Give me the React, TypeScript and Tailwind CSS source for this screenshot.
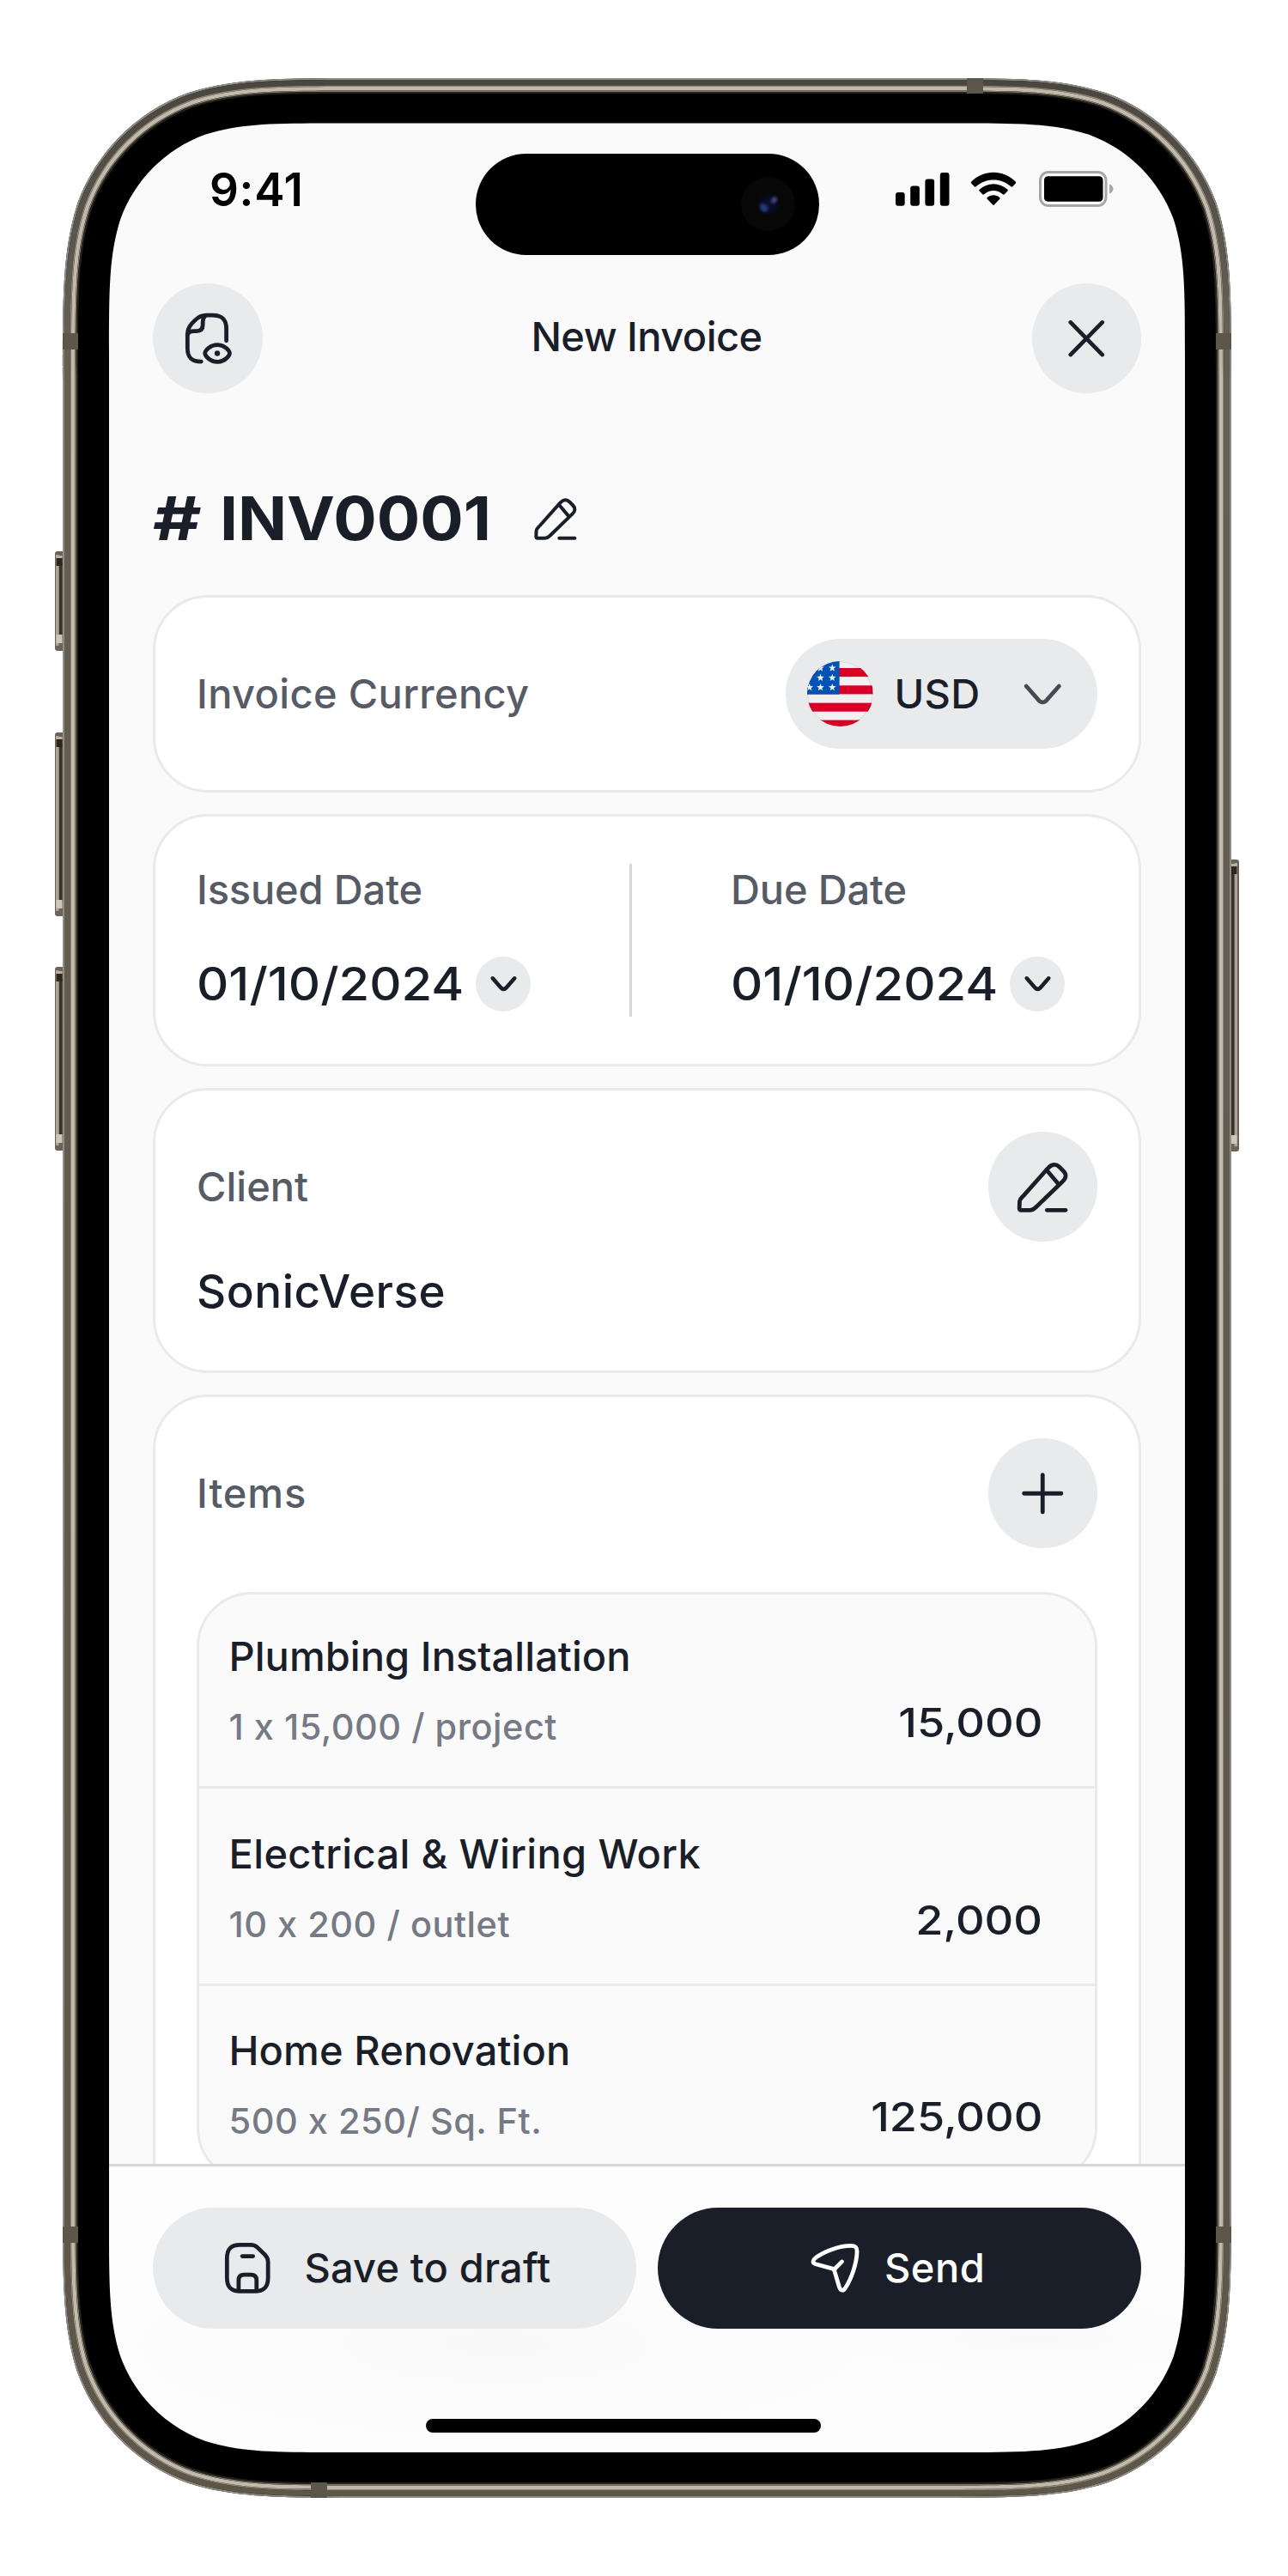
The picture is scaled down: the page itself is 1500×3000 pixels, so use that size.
import type { ReactNode } from "react";

/** Rounded rectangle with continuous (smoothed) corners. */
function squircle(x0: number, y0: number, x1: number, y1: number, r: number) {
  const k = [1.52866, 1.08849, 0.86841, 0.63149, 0.37282, 0.16906, 0.07491].map((v) => v * r);
  const [a, b, c, d, e, f, g] = k;
  return [
    `M${x0 + a} ${y0}H${x1 - a}`,
    `C${x1 - b} ${y0} ${x1 - c} ${y0} ${x1 - d} ${y0 + g}`,
    `C${x1 - e} ${y0 + f} ${x1 - f} ${y0 + e} ${x1 - g} ${y0 + d}`,
    `C${x1} ${y0 + c} ${x1} ${y0 + b} ${x1} ${y0 + a}`,
    `V${y1 - a}`,
    `C${x1} ${y1 - b} ${x1} ${y1 - c} ${x1 - g} ${y1 - d}`,
    `C${x1 - f} ${y1 - e} ${x1 - e} ${y1 - f} ${x1 - d} ${y1 - g}`,
    `C${x1 - c} ${y1} ${x1 - b} ${y1} ${x1 - a} ${y1}`,
    `H${x0 + a}`,
    `C${x0 + b} ${y1} ${x0 + c} ${y1} ${x0 + d} ${y1 - g}`,
    `C${x0 + e} ${y1 - f} ${x0 + f} ${y1 - e} ${x0 + g} ${y1 - d}`,
    `C${x0} ${y1 - c} ${x0} ${y1 - b} ${x0} ${y1 - a}`,
    `V${y0 + a}`,
    `C${x0} ${y0 + b} ${x0} ${y0 + c} ${x0 + g} ${y0 + d}`,
    `C${x0 + f} ${y0 + e} ${x0 + e} ${y0 + f} ${x0 + d} ${y0 + g}`,
    `C${x0 + c} ${y0} ${x0 + b} ${y0} ${x0 + a} ${y0}Z`,
  ].join("");
}

const W = 1361;
const H = 2818;
const inset = (i: number) => squircle(i, i, W - i, H - i, 231 - i);
const screenHole = squircle(54, 52.5, 1307, 2765, 177);

const metal: [number, number, string][] = [
  [0, 2, "#8f8c86"],
  [2, 8.5, "url(#edge)"],
  [8.5, 10, "#8d8679"],
  [10, 14.5, "#c1baac"],
  [14.5, 16, "#7b7467"],
  [16, 18, "#26221c"],
];

function SideButton({ x, y, h, right }: { x: number; y: number; h: number; right?: boolean }) {
  return (
    <g>
      <rect x={x} y={y} width={11} height={h} rx={3} fill="#6b6458" />
      <rect x={right ? x + 5.5 : x + 1} y={y + 4} width={3.5} height={h - 10} fill="#aaa396" />
      <rect x={right ? x + 2 : x + 5} y={y + 14} width={3.5} height={h - 30} fill="#37322a" />
      <rect x={x + 1.5} y={y + 8} width={7} height={9} fill="#2b271f" />
      <rect x={x + 1.5} y={y + 5} width={7} height={3} fill="#b9b2a4" />
      <rect x={x + 1.5} y={y + h - 19} width={7} height={10} fill="#cdc6b9" />
    </g>
  );
}

function PhoneFrame() {
  return (
    <svg className="pointer-events-none absolute inset-0 overflow-visible" width={W} height={H} viewBox={`0 0 ${W} ${H}`}>
      <defs>
        <linearGradient id="edge" x1="0" y1="0" x2="0" y2="1">
          <stop offset="0" stopColor="#4a463e" />
          <stop offset="0.1" stopColor="#655f54" />
          <stop offset="1" stopColor="#5e5649" />
        </linearGradient>
      </defs>
      <SideButton x={-9} y={551} h={116} />
      <SideButton x={-9} y={762} h={214} />
      <SideButton x={-9} y={1035} h={214} />
      <SideButton x={1359} y={910} h={340} right />
      <path d={inset(0) + screenHole} fillRule="evenodd" fill="#000" />
      {metal.map(([a, b, fill]) => (
        <path key={a} d={inset(a) + inset(b)} fillRule="evenodd" fill={fill} />
      ))}
      <g fill="#5d574b">
        <rect x={0} y={297} width={18} height={19} />
        <rect x={1343} y={297} width={18} height={19} />
        <rect x={0} y={2502} width={18} height={19} />
        <rect x={1343} y={2502} width={18} height={19} />
        <rect x={1053} y={0} width={19} height={18} />
        <rect x={289} y={2800} width={19} height={18} />
      </g>
    </svg>
  );
}

function Icon({ className, sw = 1.5, children }: { className: string; sw?: number; children: ReactNode }) {
  return (
    <svg className={className} viewBox="0 0 24 24" fill="none" stroke="currentColor" strokeWidth={sw} strokeLinecap="round" strokeLinejoin="round">
      {children}
    </svg>
  );
}

const PencilPath = () => (
  <>
    <path d="M5.2 15 14 5.1C15.4 3.6 16.9 3.5 18.1 4.7L19.5 6.1C20.8 7.4 20.7 8.8 19.2 10.1L9.6 19.4C8.9 20.1 8.3 20.5 7.4 20.5H4.1C3.7 20.5 3.5 20.3 3.5 19.9L3.6 17.2C3.7 16.3 4.3 16 5.2 15Z" />
    <path d="M13.4 5.8 17.8 11" />
    <path d="M13.6 20.5H20.4" />
  </>
);

const Chevron = ({ className, sw }: { className: string; sw?: number }) => (
  <Icon className={className} sw={sw}>
    <path d="M6 9.1 10.4 14.1C11.4 15.3 12.6 15.3 13.6 14.1L18 9.1" />
  </Icon>
);

function RoundButton({ children }: { children: ReactNode }) {
  return (
    <button className="flex size-[127.5px] shrink-0 items-center justify-center rounded-full bg-[#e8eaeb] text-[#1a1e29]">
      {children}
    </button>
  );
}

function Card({ className, children }: { className?: string; children: ReactNode }) {
  return <section className={`rounded-[64px] border-3 border-[#e8eaeb] bg-white px-12 ${className ?? ""}`}>{children}</section>;
}

function Flag() {
  const star = (cx: number, cy: number) => {
    const pts = Array.from({ length: 10 }, (_, i) => {
      const r = i % 2 ? 1.9 : 4.6;
      const t = (Math.PI / 5) * i - Math.PI / 2;
      return `${(cx + r * Math.cos(t)).toFixed(2)},${(cy + r * Math.sin(t)).toFixed(2)}`;
    });
    return <polygon key={`${cx}-${cy}`} points={pts.join(" ")} fill="#f0f0f0" />;
  };
  return (
    <svg className="size-[76.5px] rounded-full" viewBox="0 0 76.5 76.5">
      <rect width="76.5" height="76.5" fill="#f0f0f0" />
      {[8, 28.3, 48.6, 68.6].map((y) => (
        <rect key={y} y={y} width="76.5" height="10.1" fill="#d80027" />
      ))}
      <circle cx="38.25" cy="38.25" r="37.6" fill="none" stroke="#000" strokeOpacity="0.08" strokeWidth="1.4" />
      <rect width="37.6" height="38.6" fill="#0052b4" />
      {[[15.5, 8], [29.3, 8], [15.5, 19.3], [29.3, 19.3], [2.8, 30.6], [15.5, 30.6], [29.3, 30.6]].map(([x, y]) => star(x, y))}
    </svg>
  );
}

function StatusBar() {
  return (
    <div className="flex h-[186.5px] items-start pl-[117px] text-black">
      <span className="mt-[45.5px] w-[309.5px] text-[53px] leading-[64px] font-semibold tracking-[0.7px]">9:41</span>
      <div className="mt-[35.5px] flex h-[117.5px] w-[400.5px] items-center justify-end rounded-full bg-black pr-[28px]">
        <div className="flex size-[63px] items-center justify-center rounded-full bg-[#070708]">
          <svg className="size-[40px]" viewBox="0 0 40 40">
            <defs>
              <radialGradient id="lens">
                <stop offset="0" stopColor="#0b1130" />
                <stop offset="1" stopColor="#05060f" />
              </radialGradient>
              <filter id="soft" x="-50%" y="-50%" width="200%" height="200%">
                <feGaussianBlur stdDeviation="1.4" />
              </filter>
            </defs>
            <circle cx="20" cy="20" r="13.5" fill="url(#lens)" />
            <ellipse cx="14.5" cy="24" rx="5.5" ry="4" transform="rotate(50 14.5 24)" fill="#233a7c" filter="url(#soft)" />
            <ellipse cx="26.5" cy="15" rx="4" ry="3" transform="rotate(-50 26.5 15)" fill="#4a468c" filter="url(#soft)" />
          </svg>
        </div>
      </div>
      <svg className="mt-[57px] ml-[89px] h-[39px] w-[63px]" viewBox="0 0 63 39">
        <rect x="0" y="23" width="10.7" height="15.7" rx="3" />
        <rect x="17.2" y="15.5" width="10.7" height="23.2" rx="3" />
        <rect x="34.4" y="7.5" width="10.7" height="31.2" rx="3" />
        <rect x="51.8" y="0" width="10.7" height="38.7" rx="3" />
      </svg>
      <svg className="mt-[56px] ml-[24px] h-[40px] w-[54px]" viewBox="0 0 54 40">
        <path d="M1.2 13.6 4.7 17.2Q5.7 18.1 6.7 17.2C18 6.8 36 6.8 47.3 17.2Q48.3 18.1 49.3 17.2L52.8 13.6Q53.7 12.6 52.7 11.6C38.2-2.9 15.8-2.9 1.3 11.6Q.3 12.6 1.2 13.6Z" />
        <path d="M10.6 22.6 14.2 26.3Q15.1 27.2 16.1 26.3C22.3 20.6 31.7 20.6 37.9 26.3Q38.9 27.2 39.8 26.3L43.4 22.6Q44.4 21.6 43.4 20.7C34.1 12 19.9 12 10.6 20.7Q9.6 21.6 10.6 22.6Z" />
        <path d="M19.7 31.8 26 38.2Q27 39.2 28 38.2L34.3 31.8Q35.3 30.8 34.2 29.9C30 26.4 24 26.4 19.8 29.9Q18.7 30.8 19.7 31.8Z" />
      </svg>
      <svg className="mt-[55px] ml-[26px] h-[42px] w-[88px]" viewBox="0 0 88 42">
        <rect x="1.5" y="1.5" width="76.5" height="39" rx="9.5" fill="none" stroke="#a6a6a6" strokeWidth="3" />
        <rect x="6" y="6.3" width="68.5" height="29.5" rx="4.5" />
        <path d="M82 15.5C84.3 16.3 86.5 18.5 86.5 21S84.3 25.7 82 26.5Z" fill="#a6a6a6" />
      </svg>
    </div>
  );
}

const items = [
  { name: "Plumbing Installation", tracking: "tracking-[0.05px]", detail: "1 x 15,000 / project", price: "15,000" },
  { name: "Electrical & Wiring Work", tracking: "tracking-[0.35px]", detail: "10 x 200 / outlet", price: "2,000" },
  { name: "Home Renovation", tracking: "tracking-[0.1px]", detail: "500 x 250/ Sq. Ft.", price: "125,000" },
];

function DateField({ label, value }: { label: string; value: string }) {
  return (
    <div className="flex flex-col gap-[45.5px]">
      <div className="text-[47px] leading-[64px] tracking-[-0.15px] text-[#565b66]">{label}</div>
      <div className="flex items-center">
        <span className="w-[325px] origin-left scale-x-[1.092] text-[53px] leading-[64px] whitespace-nowrap">{value}</span>
        <span className="flex size-16 items-center justify-center rounded-full bg-[#e8eaeb]">
          <Chevron className="size-[51px]" sw={2.15} />
        </span>
      </div>
    </div>
  );
}

export default function App() {
  return (
    <div className="h-[3000px] w-[1500px] overflow-hidden bg-white pt-[91px] pl-[73px] font-['Inter',sans-serif] font-medium text-[#1a1e29] [font-feature-settings:'calt'_0]">
      <div className="relative h-[2818px] w-[1361px] px-[54px] pt-[52.5px]">
        <div className="flex h-[2712.5px] w-[1253px] flex-col overflow-hidden rounded-[150px] bg-[#fafafa]">
          <StatusBar />

          <header className="flex h-[127.5px] shrink-0 items-center justify-between px-[51px]">
            <RoundButton>
              <Icon className="size-[76.5px]">
                <path d="M18.7 12.8V8.5C18.7 5 17.2 3.5 13.7 3.5H11.4C9.6 3.5 8.6 4 7.3 5.3L6.2 6.4C5 7.7 4.5 8.8 4.5 10.5V15.5C4.5 19 6 20.4 9.5 20.4" />
                <path d="M11 3.6C10.3 4.3 10.1 5 10.1 6V7C10.1 8.6 9.3 9.3 7.8 9.3H6.9C5.7 9.3 5 9.6 4.6 10.4" />
                <path d="M10.9 17.4C10.9 16.6 12.6 14.3 15.4 14.3S19.9 16.6 19.9 17.4 18.2 20.5 15.4 20.5 10.9 18.2 10.9 17.4Z" />
                <circle cx="15.4" cy="17.4" r="1" fill="currentColor" stroke="none" />
              </Icon>
            </RoundButton>
            <h1 className="pr-px pb-[3px] text-[47px] leading-[64px] tracking-[-0.55px]">New Invoice</h1>
            <RoundButton>
              <Icon className="size-[76.5px]">
                <path d="M6.2 6.1 17.8 17.9M17.8 6.1 6.2 17.9" />
              </Icon>
            </RoundButton>
          </header>

          <main className="min-h-0 flex-1 overflow-hidden px-[51px] pt-[108px]">
            <div className="flex h-[76.5px] items-center">
              <h2 className="flex w-[437px] text-[70px] leading-none font-bold whitespace-nowrap">
                <span className="w-[78px] origin-left scale-x-[1.25]">#</span>
                <span className="origin-left scale-x-[1.07]">INV0001</span>
              </h2>
              <Icon className="size-[64px]">
                <PencilPath />
              </Icon>
            </div>

            <div className="mt-[51px] flex flex-col gap-[25.5px]">
              <Card className="flex h-[229.5px] shrink-0 items-center justify-between">
                <span className="text-[47px] leading-[64px] tracking-[0.35px] text-[#565b66]">Invoice Currency</span>
                <button className="flex h-[127.5px] w-[363.5px] items-center rounded-full bg-[#e8eaeb] pl-[25.5px]">
                  <Flag />
                  <span className="ml-[25px] w-[134px] text-left text-[47px] leading-[64px] tracking-[0.3px]">USD</span>
                  <Chevron className="size-[76.5px] text-[#464a55]" />
                </button>
              </Card>

              <Card className="flex h-[293.5px] shrink-0 items-center">
                <div className="-mt-2 w-[503.5px]">
                  <DateField label="Issued Date" value="01/10/2024" />
                </div>
                <div className="h-[178px] w-[3.5px] bg-[#d5d6da]" />
                <div className="-mt-2 pl-[115px]">
                  <DateField label="Due Date" value="01/10/2024" />
                </div>
              </Card>

              <Card className="h-[331.5px] shrink-0 pt-12">
                <div className="flex items-center justify-between">
                  <span className="text-[47px] leading-[64px] text-[#565b66]">Client</span>
                  <RoundButton>
                    <Icon className="size-[76.5px]">
                      <PencilPath />
                    </Icon>
                  </RoundButton>
                </div>
                <div className="mt-[26px] text-[53px] leading-[64px] font-[550] tracking-[0.5px]">SonicVerse</div>
              </Card>

              <Card className="h-[969px] shrink-0 pt-12">
                <div className="flex items-center justify-between">
                  <span className="text-[47px] leading-[64px] tracking-[0.9px] text-[#565b66]">Items</span>
                  <RoundButton>
                    <Icon className="size-[76.5px]">
                      <path d="M5.2 12H18.8M12 5.2V18.8" />
                    </Icon>
                  </RoundButton>
                </div>
                <ul className="mt-[51px] rounded-[64px] border-3 border-[#e8eaeb] bg-[#fafafa]">
                  {items.map((it) => (
                    <li
                      key={it.name}
                      className="flex items-end justify-between border-b-3 border-[#e8eaeb] pt-[43.5px] pr-[61px] pb-[43px] pl-[34.5px] first:pt-[40.5px] last:border-b-0"
                    >
                      <div>
                        <div className={`text-[47px] leading-[64px] font-[550] ${it.tracking}`}>{it.name}</div>
                        <div className="mt-[25px] text-[41.5px] leading-[51px] tracking-[0.5px] text-[#757a85]">{it.detail}</div>
                      </div>
                      <div className="origin-right scale-x-[1.11] pb-[6px] text-[47px] leading-[51px]">{it.price}</div>
                    </li>
                  ))}
                </ul>
              </Card>
            </div>
          </main>

          <footer className="h-[336px] shrink-0 border-t-3 border-[#d5d6da] bg-[#fdfdfd] bg-[radial-gradient(ellipse_at_36%_62%,#f9f9f9_0%,transparent_42%),radial-gradient(ellipse_at_86%_60%,#f9f9f9_0%,transparent_16%)]">
            <div className="flex gap-[25px] px-[51px] pt-[48px]">
              <button className="flex h-[140.5px] w-[563px] shrink-0 items-center rounded-full bg-[#e8eaeb] pl-[72px]">
                <Icon className="size-[76.5px]">
                  <path d="M4.5 8.5C4.5 5 6 3.6 9.3 3.6H13.2C14.3 3.6 14.9 3.8 15.7 4.6L18.4 7.2C19.2 8 19.5 8.7 19.5 9.8V15.6C19.5 19 18 20.5 14.6 20.5H9.4C6 20.5 4.5 19 4.5 15.6Z" />
                  <path d="M8.75 20.4V16.5C8.75 15.2 9.4 14.5 10.8 14.5H13.2C14.6 14.5 15.3 15.2 15.3 16.5V20.4" />
                  <path d="M10.1 7.7H14" />
                </Icon>
                <span className="ml-[28px] text-[47px] leading-[64px] tracking-[0.15px]">Save to draft</span>
              </button>
              <button className="flex h-[140.5px] w-[563px] shrink-0 items-center rounded-full bg-[#1a1e29] pl-[168px] text-white">
                <Icon className="size-[76.5px]">
                  <path d="M5.1 8.2C8 6 13.5 3.9 17.9 3.9C19.5 3.9 20.1 4.4 20.1 6C20 10.5 18 16 15.9 19.2C15.1 20.6 14.1 20.4 13.6 18.9L11.9 13.2C11.8 12.6 11.5 12.3 10.9 12.2L5 10.6C3.6 10.1 3.9 9.1 5.1 8.2Z" />
                  <path d="M11.9 12.4 14.6 9.7" />
                </Icon>
                <span className="ml-[19.5px] text-[47px] leading-[64px] tracking-[0.5px]">Send</span>
              </button>
            </div>
            <div className="mt-[105px] ml-[369px] h-4 w-[460px] rounded-full bg-black" />
          </footer>
        </div>
        <PhoneFrame />
      </div>
    </div>
  );
}
